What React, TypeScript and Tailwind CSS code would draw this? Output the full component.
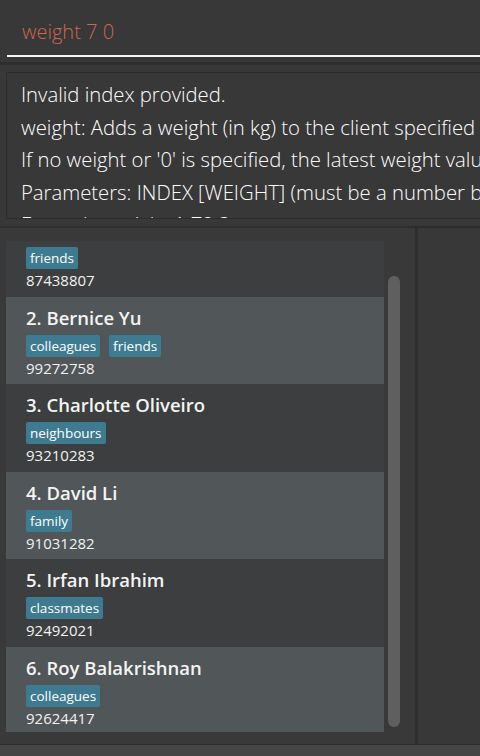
import React from "react";

type Person = { id: number; name: string; tags: string[]; phone: string };

const people: Person[] = [
  { id: 1, name: "Alex Yeoh", tags: ["friends"], phone: "87438807" },
  { id: 2, name: "Bernice Yu", tags: ["colleagues", "friends"], phone: "99272758" },
  { id: 3, name: "Charlotte Oliveiro", tags: ["neighbours"], phone: "93210283" },
  { id: 4, name: "David Li", tags: ["family"], phone: "91031282" },
  { id: 5, name: "Irfan Ibrahim", tags: ["classmates"], phone: "92492021" },
  { id: 6, name: "Roy Balakrishnan", tags: ["colleagues"], phone: "92624417" },
];

const resultLines = [
  "Invalid index provided.",
  "weight: Adds a weight (in kg) to the client specified by the index number used in the displayed person list.",
  "If no weight or '0' is specified, the latest weight value will be removed.",
  "Parameters: INDEX [WEIGHT] (must be a number between 0 and 500)",
  "Example: weight 1 72.3",
];

function PersonCard({ person }: { person: Person }) {
  const even = person.id % 2 === 0;
  return (
    <div
      className={`h-[87.5px] shrink-0 pl-[20px] pt-[10px] ${
        even ? "bg-[#515658]" : "bg-[#3c3e3f]"
      }`}
    >
      <div className="text-[18.5px] leading-[22px] font-semibold text-[#f4f4f4] whitespace-nowrap">
        {person.id}. {person.name}
      </div>
      <div className="flex gap-[9px] mt-[6px]">
        {person.tags.map((t) => (
          <span
            key={t}
            className="h-[22px] px-[4px] rounded-[2px] bg-[#3e7b91] text-[13.5px] leading-[22px] text-white"
          >
            {t}
          </span>
        ))}
      </div>
      <div className="text-[15px] leading-[20px] text-[#f2f2f2] mt-[1px]">{person.phone}</div>
    </div>
  );
}

export default function App() {
  return (
    <div
      className="w-[480px] h-[756px] overflow-hidden bg-[#383838] flex flex-col"
      style={{ fontFamily: '"Open Sans", "Noto Sans", sans-serif' }}
    >
      {/* Command box */}
      <div className="h-[55px] shrink-0 pl-[22px] pt-[18px]">
        <div className="text-[20px] leading-[28px] font-light text-[#d06651]">weight 7 0</div>
      </div>
      <div className="h-[2px] shrink-0 ml-[7px] bg-[#f4f4f4]" />

      {/* Result display */}
      <div className="h-[5px] shrink-0" />
      <div className="h-[3px] shrink-0 bg-[#2d2d2d]" />
      <div className="h-[7px] shrink-0" />
      <div className="h-[147px] shrink-0 ml-[6px] border border-r-0 border-[#2c2c2c] overflow-hidden pl-[14px] pt-[5px]">
        {resultLines.map((l) => (
          <div key={l} className="text-[20.3px] leading-[32.5px] font-light text-white whitespace-nowrap">
            {l}
          </div>
        ))}
      </div>
      <div className="h-[7px] shrink-0" />
      <div className="h-[2px] shrink-0 bg-[#2d2d2d]" />

      {/* Lists */}
      <div className="flex flex-1 min-h-0">
        <div className="w-[415px] shrink-0 flex bg-[#393939] pt-[13px] pb-[12px] pl-[6px]">
          <div className="w-[378px] overflow-hidden flex flex-col">
            <div className="-mt-[32px] flex flex-col">
              {people.map((p) => (
                <PersonCard key={p.id} person={p} />
              ))}
            </div>
          </div>
          <div className="ml-[4px] mt-[35px] mb-[5px] w-[12px] rounded-[6px] bg-[#5f5f5f]" />
        </div>
        <div className="w-[3px] shrink-0 bg-[#2e2e2e]" />
        <div className="flex-1 bg-[#383838]" />
      </div>

      {/* Status bar */}
      <div className="h-[1px] shrink-0 bg-[#2e2e2e]" />
      <div className="h-[11px] shrink-0 bg-[#464646]" />
    </div>
  );
}
